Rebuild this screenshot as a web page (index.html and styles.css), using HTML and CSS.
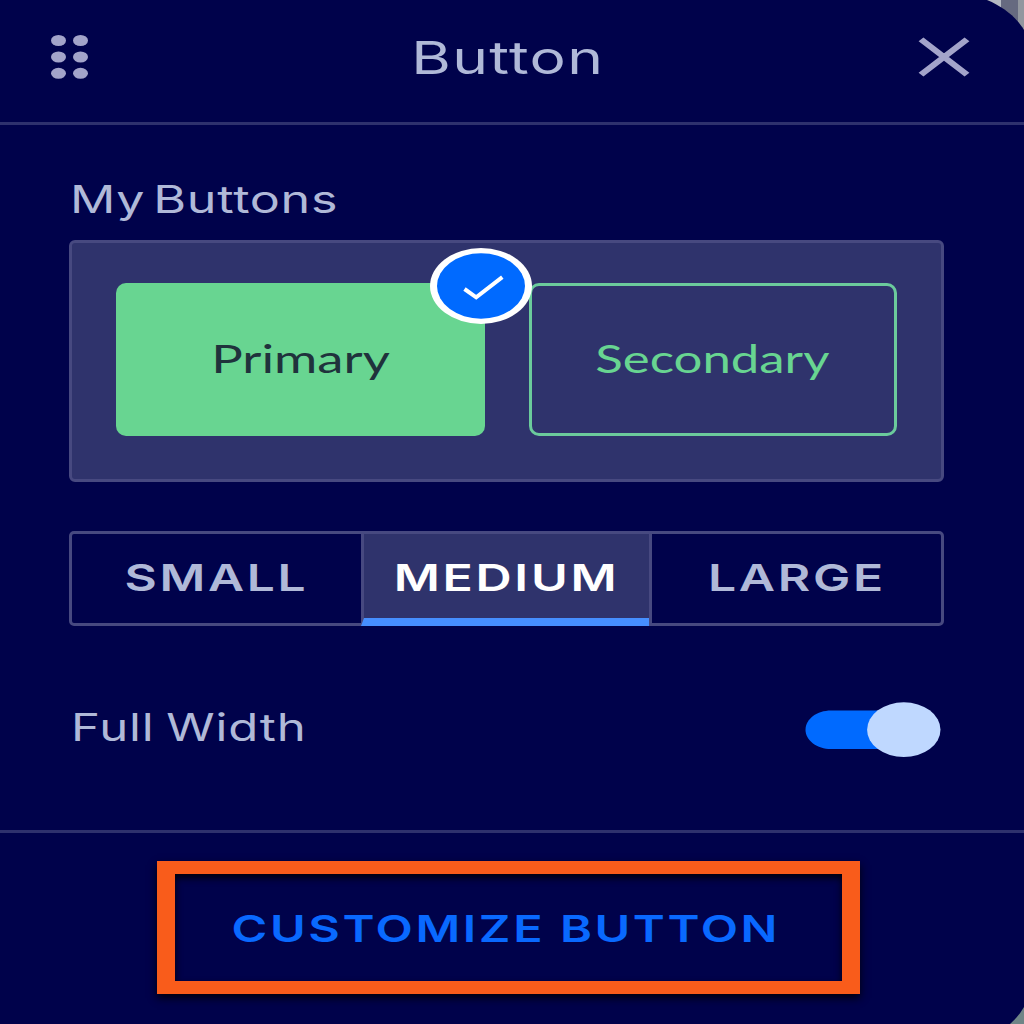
FILE: index.html
```html
<!DOCTYPE html>
<html lang="en">
<head>
<meta charset="utf-8">
<title>Button</title>
<link rel="stylesheet" href="styles.css">
</head>
<body>
<main class="panel">
  <header class="header">
    <svg class="grip" viewBox="0 0 38 44" preserveAspectRatio="none"><g fill="#a3a4ca"><ellipse cx="7.5" cy="5.5" rx="7.5" ry="5.5"/><ellipse cx="29.5" cy="5.5" rx="7.5" ry="5.5"/><ellipse cx="7.5" cy="22" rx="7.5" ry="5.5"/><ellipse cx="29.5" cy="22" rx="7.5" ry="5.5"/><ellipse cx="7.5" cy="38.3" rx="7.5" ry="5.5"/><ellipse cx="29.5" cy="38.3" rx="7.5" ry="5.5"/></g></svg>
    <h1 class="title"><span class="wide wide-title">Button</span></h1>
    <svg class="close" viewBox="0 0 38 38" preserveAspectRatio="none"><path d="M2.2 2.2L35.8 35.8M35.8 2.2L2.2 35.8" stroke="#a3a4ca" stroke-width="5"/></svg>
  </header>
  <section class="content">
    <h2 class="label"><span class="wide wide-mine">My Buttons</span></h2>
    <div class="choices">
      <button class="choice primary"><span class="wide wide-primary">Primary</span>
        <svg class="badge" viewBox="0 0 102 76"><ellipse cx="51" cy="38" rx="51" ry="38" fill="#fff"/><ellipse cx="51" cy="38" rx="44" ry="32.7" fill="#006aff"/><path d="M34.5 41L46.2 49.3L72.3 29.2" fill="none" stroke="#fff" stroke-width="4"/></svg>
      </button>
      <button class="choice secondary"><span class="wide wide-secondary">Secondary</span></button>
    </div>
    <div class="sizes">
      <button class="size"><span class="wide wide-small">SMALL</span></button>
      <button class="size active"><span class="wide wide-medium">MEDIUM</span></button>
      <button class="size"><span class="wide wide-large">LARGE</span></button>
    </div>
    <div class="setting">
      <span class="label"><span class="wide wide-full">Full Width</span></span>
      <svg class="toggle" viewBox="0 0 136 56"><path d="M26 8.5H100V47H26C12 47 .5 38.4 .5 27.7S12 8.5 26 8.5Z" fill="#006aff"/><ellipse cx="98.8" cy="27.7" rx="36.7" ry="27.4" fill="#bfd8ff"/></svg>
    </div>
  </section>
  <footer class="footer">
    <button class="customize"><span class="wide wide-customize">CUSTOMIZE BUTTON</span></button>
  </footer>
</main>
</body>
</html>
```
FILE: styles.css
```css
* { box-sizing: border-box; }
body {
  margin: 0;
  width: 1024px;
  height: 1024px;
  overflow: hidden;
  background: linear-gradient(90deg, #b4b9c2 1001px, #666a80 1001px 1018px, #92979f 1018px) 0 0 / 100% 60px no-repeat, #6f8587;
  font-family: Inter, "Liberation Sans", sans-serif;
}
button {
  margin: 0;
  padding: 0;
  border: 0;
  background: none;
  font: inherit;
  color: inherit;
}
.panel {
  height: 1024px;
  display: flex;
  flex-direction: column;
  background: #00024b;
  color: #b0b9d8;
  clip-path: path("M0 0H987C1004 7 1017 18 1024 30V1007Q1019 1016 1010 1024H0Z");
}
.header {
  height: 125px;
  flex: none;
  display: grid;
  grid-template-columns: 52px 1fr 52px;
  align-items: center;
  padding: 0 54px 8px 51px;
  border-bottom: 3px solid #2e316d;
}
.grip { width: 38px; height: 44px; }
.close { width: 52px; height: 40px; }
.title {
  margin: 0;
  text-align: center;
  font-weight: 400;
  font-size: 45px;
  line-height: 56px;
}
.wide {
  display: inline-block;
  white-space: nowrap;
}
.content {
  height: 705px;
  flex: none;
  padding: 51px 80px 0 69px;
}
.label {
  display: block;
  margin: 0;
  font-weight: 400;
  font-size: 37.5px;
  line-height: 48px;
}
.choices {
  height: 242px;
  margin-top: 16px;
  padding: 40px 44px 43px;
  display: grid;
  grid-template-columns: 1fr 1fr;
  gap: 44px;
  background: #2f336c;
  border: 3px solid #474980;
  border-radius: 6px;
}
.choice {
  position: relative;
  border-radius: 10px;
  font-family: Lato, sans-serif;
  font-size: 38px;
}
.primary { background: #68d591; color: #20323c; }
.secondary { border: 3px solid #6bcb9c; color: #68d591; }
.badge {
  position: absolute;
  z-index: 1;
  top: -35px;
  right: -47px;
  width: 102px;
  height: 76px;
}
.sizes {
  height: 95px;
  margin-top: 49px;
  display: grid;
  grid-template-columns: 289px 288px 1fr;
  border: 3px solid #474980;
  border-radius: 5px;
}
.size {
  font-weight: 600;
  font-size: 37.5px;
}
.active {
  margin-bottom: -3px;
  background: #2f336c;
  color: #fff;
  border-left: 3px solid #474980;
  border-bottom: 8px solid #468fff;
}
.size:last-child { border-left: 3px solid #474980; }
.setting {
  margin-top: 76px;
  display: flex;
  justify-content: space-between;
  align-items: flex-start;
}
.toggle { width: 136px; height: 56px; margin-right: 3px; }
.footer {
  flex: 1;
  border-top: 3px solid #2e316d;
  padding: 28px 0 0 157px;
}
.customize {
  width: 703px;
  height: 133px;
  border: solid #f95c1b;
  border-width: 13.5px 18px;
  color: #0969ff;
  font-weight: 600;
  font-size: 37.5px;
  box-shadow: 0 4px 8px #00000c, inset 0 4px 7px #00000c;
}

/* The lettering is extended horizontally; each label has its own stretch. */
.wide-title { transform: translate(-3px, 1px) scaleX(1.345); letter-spacing: 1px; }
.wide-mine { transform: translateX(1px) scaleX(1.34); transform-origin: left; letter-spacing: .5px; word-spacing: -5px; }
.wide-full { transform: translate(2px, 2px) scaleX(1.31); transform-origin: left; letter-spacing: .6px; word-spacing: -2px; }
.wide-primary { transform: translateY(-2px) scaleX(1.385); }
.wide-secondary { transform: translateY(-2px) scaleX(1.34); }
.wide-small { transform: translateY(-1px) scaleX(1.325); letter-spacing: 2px; }
.wide-medium { transform: translateY(1px) scaleX(1.335); letter-spacing: 2px; }
.wide-large { transform: translateY(-1px) scaleX(1.33); letter-spacing: 2px; }
.wide-customize { transform: translate(-3px, 1px) scaleX(1.295); letter-spacing: 2px; }
```
